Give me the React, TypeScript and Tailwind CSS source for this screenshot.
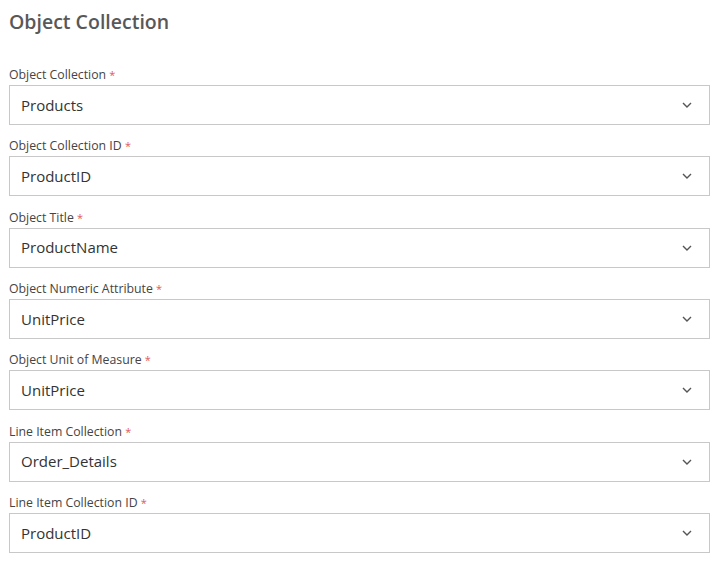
const fields = [
  { label: "Object Collection", value: "Products" },
  { label: "Object Collection ID", value: "ProductID" },
  { label: "Object Title", value: "ProductName" },
  { label: "Object Numeric Attribute", value: "UnitPrice" },
  { label: "Object Unit of Measure", value: "UnitPrice" },
  { label: "Line Item Collection", value: "Order_Details" },
  { label: "Line Item Collection ID", value: "ProductID" },
];

function Chevron() {
  return (
    <svg className="w-3 h-3 text-[#555]" viewBox="0 0 12 12" fill="none" stroke="currentColor" strokeWidth="1.4">
      <path d="M2 4l4 4 4-4" />
    </svg>
  );
}

export default function App() {
  return (
    <div className="w-[722px] h-[564px] bg-white pl-[9px] pr-[12px] pt-[9px] font-['Open_Sans',sans-serif]">
      <h1 className="text-[19.5px] leading-[26px] font-semibold text-[#585858]">Object Collection</h1>
      <div className="mt-[30px] flex flex-col gap-[11.35px]">
        {fields.map((f) => (
          <div key={f.label}>
            <div className="text-[12.3px] leading-[20px] text-[#444]">
              {f.label} <span className="text-[#e05a5a] text-[11px]">*</span>
            </div>
            <div className="h-[40px] border border-[#c8c8c8] flex items-center justify-between pl-[11px] pr-[16px]">
              <span className="text-[15px] text-[#333]">{f.value}</span>
              <Chevron />
            </div>
          </div>
        ))}
      </div>
    </div>
  );
}
